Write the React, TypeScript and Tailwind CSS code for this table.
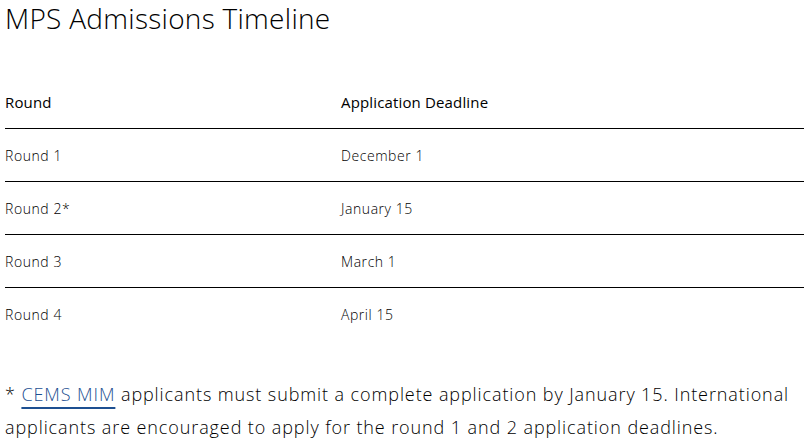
const rows = [
  { round: 'Round 1', deadline: 'December 1' },
  { round: 'Round 2*', deadline: 'January 15' },
  { round: 'Round 3', deadline: 'March 1' },
  { round: 'Round 4', deadline: 'April 15' },
]

export default function App() {
  return (
    <div className="min-h-screen bg-white px-[5px] text-black font-['Open_Sans','Liberation_Sans',sans-serif]">
      <h1 className="h-[36px] text-[28px] leading-[36px] font-light tracking-[0.01em]">MPS Admissions Timeline</h1>

      <div className="mt-[40px]">
        <div className="grid h-[53px] grid-cols-[336px_1fr] items-center border-b border-black text-[15px] font-normal tracking-[0.01em]">
          <div>Round</div>
          <div>Application Deadline</div>
        </div>
        {rows.map((r, i) => (
          <div
            key={r.round}
            className={`grid h-[53px] grid-cols-[336px_1fr] items-center text-[14px] font-light tracking-[0.04em] ${
              i < rows.length - 1 ? 'border-b border-black' : ''
            }`}
          >
            <div>{r.round}</div>
            <div>{r.deadline}</div>
          </div>
        ))}
      </div>

      <p className="mt-[37px] text-[18px] leading-[33px] font-light tracking-[0.05em]">
        *{' '}
        <a href="#" className="text-[#1d4f91] underline decoration-[#1d4f91] decoration-2 underline-offset-[6px]">
          CEMS MIM
        </a>{' '}
        applicants must submit a complete application by January 15. International applicants are encouraged to
        apply for the round 1 and 2 application deadlines.
      </p>
    </div>
  )
}
